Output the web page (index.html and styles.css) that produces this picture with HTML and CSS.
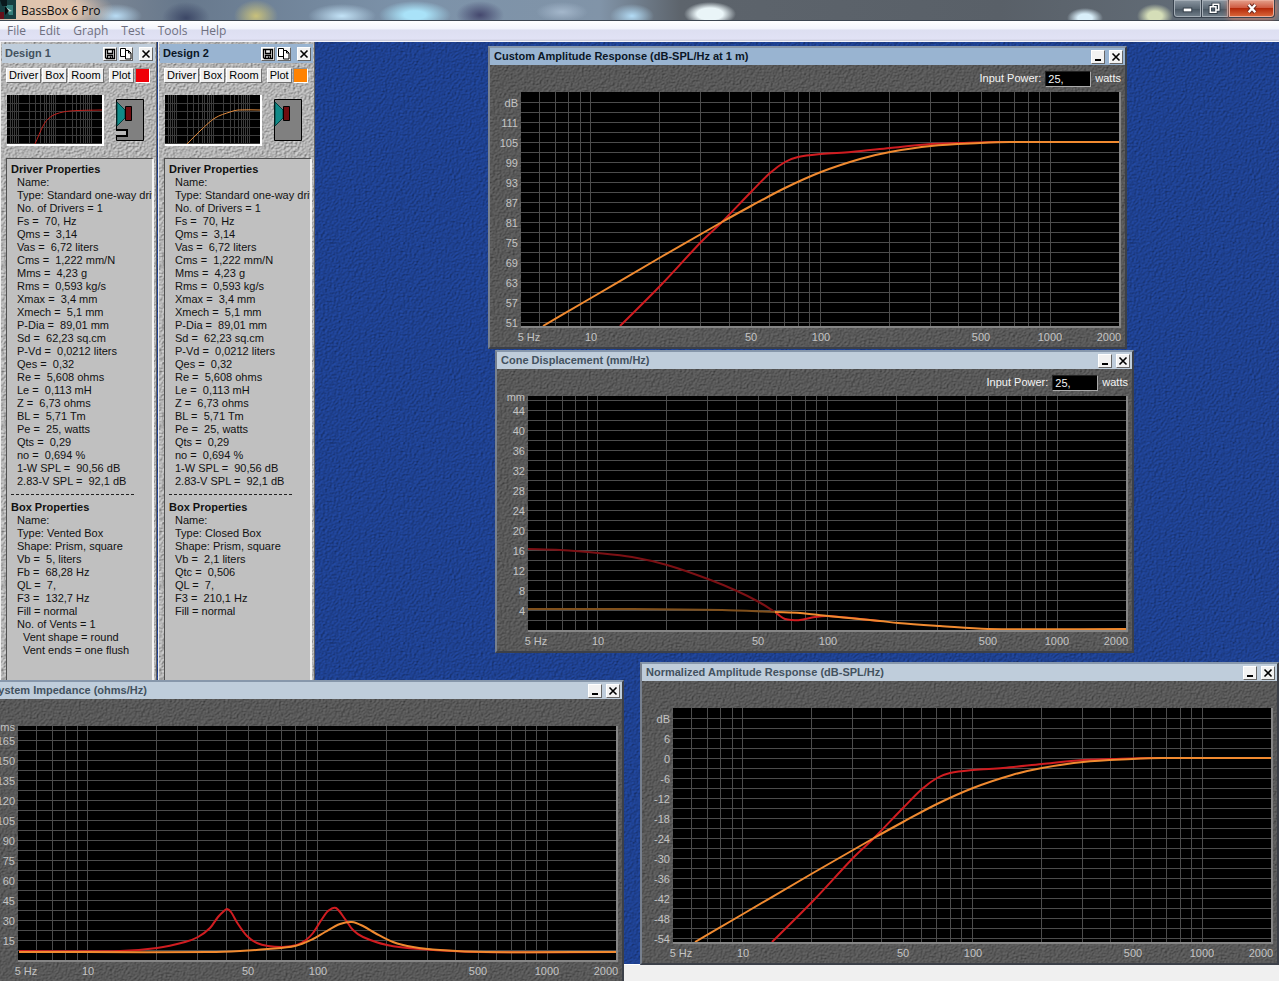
FILE: index.html
```html
<!DOCTYPE html>
<html lang="en">
<head>
<meta charset="utf-8">
<title>BassBox 6 Pro</title>
<link rel="stylesheet" href="styles.css">
</head>
<body>
<svg class="symbols" aria-hidden="true">
  <symbol id="i-close" viewBox="0 0 12 12"><path d="M2.500 2.500l7 7M9.500 2.500l-7 7" fill="none" stroke="#000" stroke-width="1.600"/></symbol>
  <symbol id="i-min" viewBox="0 0 12 12"><path d="M3 9h6" fill="none" stroke="#000" stroke-width="2"/></symbol>
  <symbol id="i-save" viewBox="0 0 12 12"><path d="M1.500 1.500h9v9h-8l-1-1zM3.500 1.500v4h5v-4M3.500 10.500v-3h5v3M6.500 8.500v2" fill="none" stroke="#000" stroke-width="1.300"/></symbol>
  <symbol id="i-copy" viewBox="0 0 12 12"><path d="M.5.5h5v8h-5z" fill="#fff" stroke="#000"/><path d="M5.500 2.500h3l2.500 2.500v6h-5.500zM8.500 2.500v2.500h2.500" fill="#fff" stroke="#000"/></symbol>
</svg>

<div class="app">
  <header class="app-title">
    <svg class="app-icon" viewBox="0 0 16 19" aria-hidden="true">
      <path d="M0 0h16v19H0z" fill="#173e40"/><path d="M0 12h4v7H0z" fill="#64101a"/><path d="M4 5h9v10H9z" fill="#357f7b"/><path d="M7 8l5 3-5 1z" fill="#b8d8d0"/><path d="M0 0h7v6H2z" fill="#0a191c"/><path d="M5 6v9l4-4z" fill="#06090b"/>
    </svg>
    <h1>BassBox 6 Pro</h1>
    <div class="app-controls">
      <button class="ctl" aria-label="Minimize"><svg viewBox="0 0 28 17"><path d="M9 9.500h10" stroke="#333d48" stroke-width="5"/><path d="M10 9.500h8" stroke="#fff" stroke-width="3"/></svg></button>
      <button class="ctl ctl-max" aria-label="Restore"><svg viewBox="0 0 26 17"><path d="M8 6h6v6H8zM11 6V3.500h6v6h-3" fill="none" stroke="#333d48" stroke-width="3.500"/><path d="M8 6h6v6H8zM11 6V3.500h6v6h-3" fill="none" stroke="#fff" stroke-width="1.600"/></svg></button>
      <button class="ctl ctl-close" aria-label="Close"><svg viewBox="0 0 46 17"><path d="M20 4l7 8M27 4l-7 8" fill="none" stroke="#6b2a20" stroke-width="4.500"/><path d="M20 4l7 8M27 4l-7 8" fill="none" stroke="#fff" stroke-width="2.500"/></svg></button>
    </div>
  </header>
  <nav class="menu">
    <button>File</button><button>Edit</button><button>Graph</button><button>Test</button><button>Tools</button><button>Help</button>
  </nav>

  <main class="desktop">
    <section class="design">
      <header class="design-bar">
        <h2>Design 1</h2>
        <button class="tool" aria-label="Save"><svg><use href="#i-save"/></svg></button>
        <button class="tool" aria-label="Copy"><svg><use href="#i-copy"/></svg></button>
        <button class="tool tool-close" aria-label="Close"><svg><use href="#i-close"/></svg></button>
      </header>
      <div class="design-tabs">
        <button>Driver</button><button>Box</button><button>Room</button><button class="plot-btn">Plot</button><button class="swatch swatch-red" aria-label="Plot color"></button>
      </div>
      <div class="design-view">
        <svg class="mini" viewBox="0 0 95 49" data-color="#c0201c" data-curve="28,49 36,31 41,24 49,19 63,16 95,15"></svg>
        <svg class="box-icon" viewBox="0 0 28 42" aria-hidden="true"><path d="M.5.5h27v41H.5z" fill="#808080" stroke="#000"/><path d="M1 3l8 8v8l-8 8z" fill="#108a88" stroke="#073c3c"/><path d="M9.500 7.500h6v14h-6z" fill="#700c10" stroke="#000"/><path d="M0 31h11v6H0" fill="#b8b8b8" stroke="#000" stroke-width="2"/></svg>
      </div>
      <div class="props">
        <h3>Driver Properties</h3>
        <ul>
          <li>Name:</li><li>Type: Standard one-way driv</li><li>No. of Drivers = 1</li><li>Fs =&nbsp; 70, Hz</li><li>Qms =&nbsp; 3,14</li><li>Vas =&nbsp; 6,72 liters</li><li>Cms =&nbsp; 1,222 mm/N</li><li>Mms =&nbsp; 4,23 g</li><li>Rms =&nbsp; 0,593 kg/s</li><li>Xmax =&nbsp; 3,4 mm</li><li>Xmech =&nbsp; 5,1 mm</li><li>P-Dia =&nbsp; 89,01 mm</li><li>Sd =&nbsp; 62,23 sq.cm</li><li>P-Vd =&nbsp; 0,0212 liters</li><li>Qes =&nbsp; 0,32</li><li>Re =&nbsp; 5,608 ohms</li><li>Le =&nbsp; 0,113 mH</li><li>Z =&nbsp; 6,73 ohms</li><li>BL =&nbsp; 5,71 Tm</li><li>Pe =&nbsp; 25, watts</li><li>Qts =&nbsp; 0,29</li><li>no =&nbsp; 0,694 %</li><li>1-W SPL =&nbsp; 90,56 dB</li><li>2.83-V SPL =&nbsp; 92,1 dB</li>
        </ul>
        <hr>
        <h3>Box Properties</h3>
        <ul>
          <li>Name:</li><li>Type: Vented Box</li><li>Shape: Prism, square</li><li>Vb =&nbsp; 5, liters</li><li>Fb =&nbsp; 68,28 Hz</li><li>QL =&nbsp; 7,</li><li>F3 =&nbsp; 132,7 Hz</li><li>Fill = normal</li><li>No. of Vents = 1</li><li class="sub">Vent shape = round</li><li class="sub">Vent ends = one flush</li>
        </ul>
      </div>
    </section>

    <section class="design">
      <header class="design-bar active">
        <h2>Design 2</h2>
        <button class="tool" aria-label="Save"><svg><use href="#i-save"/></svg></button>
        <button class="tool" aria-label="Copy"><svg><use href="#i-copy"/></svg></button>
        <button class="tool tool-close" aria-label="Close"><svg><use href="#i-close"/></svg></button>
      </header>
      <div class="design-tabs">
        <button>Driver</button><button>Box</button><button>Room</button><button class="plot-btn">Plot</button><button class="swatch swatch-orange" aria-label="Plot color"></button>
      </div>
      <div class="design-view">
        <svg class="mini" viewBox="0 0 95 49" data-color="#e08a3c" data-curve="22,49 36,35 50,23 65,17 73,15 95,15"></svg>
        <svg class="box-icon" viewBox="0 0 28 42" aria-hidden="true"><path d="M.5.5h27v41H.5z" fill="#808080" stroke="#000"/><path d="M1 3l8 8v8l-8 8z" fill="#108a88" stroke="#073c3c"/><path d="M9.500 7.500h6v14h-6z" fill="#700c10" stroke="#000"/></svg>
      </div>
      <div class="props">
        <h3>Driver Properties</h3>
        <ul>
          <li>Name:</li><li>Type: Standard one-way driv</li><li>No. of Drivers = 1</li><li>Fs =&nbsp; 70, Hz</li><li>Qms =&nbsp; 3,14</li><li>Vas =&nbsp; 6,72 liters</li><li>Cms =&nbsp; 1,222 mm/N</li><li>Mms =&nbsp; 4,23 g</li><li>Rms =&nbsp; 0,593 kg/s</li><li>Xmax =&nbsp; 3,4 mm</li><li>Xmech =&nbsp; 5,1 mm</li><li>P-Dia =&nbsp; 89,01 mm</li><li>Sd =&nbsp; 62,23 sq.cm</li><li>P-Vd =&nbsp; 0,0212 liters</li><li>Qes =&nbsp; 0,32</li><li>Re =&nbsp; 5,608 ohms</li><li>Le =&nbsp; 0,113 mH</li><li>Z =&nbsp; 6,73 ohms</li><li>BL =&nbsp; 5,71 Tm</li><li>Pe =&nbsp; 25, watts</li><li>Qts =&nbsp; 0,29</li><li>no =&nbsp; 0,694 %</li><li>1-W SPL =&nbsp; 90,56 dB</li><li>2.83-V SPL =&nbsp; 92,1 dB</li>
        </ul>
        <hr>
        <h3>Box Properties</h3>
        <ul>
          <li>Name:</li><li>Type: Closed Box</li><li>Shape: Prism, square</li><li>Vb =&nbsp; 2,1 liters</li><li>Qtc =&nbsp; 0,506</li><li>QL =&nbsp; 7,</li><li>F3 =&nbsp; 210,1 Hz</li><li>Fill = normal</li>
        </ul>
      </div>
    </section>
  </main>
  <footer class="status"></footer>

  <section class="window win-custom">
    <header class="win-bar active"><h2>Custom Amplitude Response (dB-SPL/Hz at 1 m)</h2>
      <button class="tool" aria-label="Minimize"><svg><use href="#i-min"/></svg></button><button class="tool" aria-label="Close"><svg><use href="#i-close"/></svg></button></header>
    <div class="win-tools"><label for="power-a">Input Power:</label><input id="power-a" type="text" value="25,"><span>watts</span></div>
    <div class="chart" data-plot="amplitude">
      <ol class="ylabels"><li class="unit">dB</li><li>111</li><li>105</li><li>99</li><li>93</li><li>87</li><li>81</li><li>75</li><li>69</li><li>63</li><li>57</li><li>51</li></ol>
    </div>
  </section>

  <section class="window win-cone">
    <header class="win-bar"><h2>Cone Displacement (mm/Hz)</h2>
      <button class="tool" aria-label="Minimize"><svg><use href="#i-min"/></svg></button><button class="tool" aria-label="Close"><svg><use href="#i-close"/></svg></button></header>
    <div class="win-tools"><label for="power-b">Input Power:</label><input id="power-b" type="text" value="25,"><span>watts</span></div>
    <div class="chart high" data-plot="cone">
      <ol class="ylabels"><li class="unit">mm</li><li>44</li><li>40</li><li>36</li><li>32</li><li>28</li><li>24</li><li>20</li><li>16</li><li>12</li><li>8</li><li>4</li></ol>
    </div>
  </section>

  <section class="window win-impedance">
    <header class="win-bar"><h2>System Impedance (ohms/Hz)</h2>
      <button class="tool" aria-label="Minimize"><svg><use href="#i-min"/></svg></button><button class="tool" aria-label="Close"><svg><use href="#i-close"/></svg></button></header>
    <div class="win-tools"></div>
    <div class="chart high" data-plot="impedance">
      <ol class="ylabels"><li class="unit">ohms</li><li>165</li><li>150</li><li>135</li><li>120</li><li>105</li><li>90</li><li>75</li><li>60</li><li>45</li><li>30</li><li>15</li></ol>
    </div>
  </section>

  <section class="window win-normal">
    <header class="win-bar"><h2>Normalized Amplitude Response (dB-SPL/Hz)</h2>
      <button class="tool" aria-label="Minimize"><svg><use href="#i-min"/></svg></button><button class="tool" aria-label="Close"><svg><use href="#i-close"/></svg></button></header>
    <div class="win-tools"></div>
    <div class="chart" data-plot="amplitude">
      <ol class="ylabels"><li class="unit">dB</li><li>6</li><li>0</li><li>-6</li><li>-12</li><li>-18</li><li>-24</li><li>-30</li><li>-36</li><li>-42</li><li>-48</li><li>-54</li></ol>
    </div>
  </section>
</div>
<script src="app.js"></script>
</body>
</html>
```

FILE: styles.css
```css
* { box-sizing: border-box; }

body {
  margin: 0;
  overflow: hidden;
  font-family: "Liberation Sans", Arial, sans-serif;
  font-size: 11px;
  line-height: 13px;
  color: #111;
}

h1, h2, h3, ul, ol { margin: 0; padding: 0; list-style: none; font-size: inherit; }

button { padding: 0; border: 0; font: inherit; color: inherit; background: none; }

.symbols { position: absolute; width: 0; height: 0; }

.app {
  position: relative;
  display: flex;
  flex-direction: column;
  height: 100vh;
  overflow: hidden;
}

/* Application frame */

.app-title {
  display: flex;
  flex: none;
  height: 21px;
  border-bottom: 1px solid #3c4650;
  background:
    radial-gradient(ellipse 74px 26px at 40px 10px, #dfc4ae 50%, transparent),
    radial-gradient(ellipse 26px 12px at 116px 16px, #b9dcf4, transparent),
    radial-gradient(ellipse 24px 16px at 186px 18px, #3c4766, transparent),
    radial-gradient(ellipse 22px 16px at 256px 16px, #c9c17b, transparent),
    radial-gradient(ellipse 34px 12px at 342px 16px, #c3e3f7, transparent),
    radial-gradient(ellipse 36px 14px at 415px 15px, #a9e2f8 30%, transparent),
    radial-gradient(ellipse 24px 14px at 480px 15px, #45486e, transparent),
    radial-gradient(ellipse 26px 10px at 562px 12px, #a4b7cb, transparent),
    radial-gradient(ellipse 22px 12px at 632px 16px, #b3dcf6, transparent),
    radial-gradient(ellipse 26px 12px at 710px 14px, #eaf5f8 50%, transparent),
    radial-gradient(ellipse 18px 10px at 1085px 18px, #d9effa 40%, transparent),
    radial-gradient(ellipse 18px 12px at 1155px 16px, #d5deb8 40%, transparent),
    linear-gradient(90deg, #94989e 0, #67788c 180px, #7c92a9 400px, #8194a8 600px, #5d646c 680px, #596068 1000px, #66727e 100%);
}

.app-icon { width: 16px; height: 19px; }

.app-title h1 {
  flex: 1;
  padding-left: 5px;
  font: 12px/21px "Open Sans", "Noto Sans", sans-serif;
  color: #0c0c0c;
}

.app-controls { display: flex; height: 18px; margin-right: 4px; }
.ctl {
  width: 29px;
  border: 1px solid #38424e;
  border-top: 0;
  border-radius: 0 0 0 4px;
  background: linear-gradient(#8b96a1, #5b6874 50%, #485561 52%, #74818c);
  box-shadow: inset 0 0 0 1px #a5aeb7;
}
.ctl svg { display: block; width: 100%; height: 16px; }
.ctl-max { width: 27px; border-left: 0; border-radius: 0; }
.ctl-close {
  width: 46px;
  border-left: 0;
  border-radius: 0 0 4px 0;
  background: linear-gradient(#e5a18d, #cf5c43 45%, #b52a0b 50%, #dd6a3c);
  box-shadow: inset 0 0 0 1px #ecae9c, 0 0 6px #f08060;
}

.menu {
  display: flex;
  flex: none;
  gap: 13px;
  height: 21px;
  padding-left: 7px;
  border-bottom: 1px solid #f4f4fa;
  background: linear-gradient(#fff 0, #f3f5fc 8px, #dddff1 9px, #e1e2f5 18px, #c6c7d6 20px);
  color: #6f7080;
  font: 12px/20px "Open Sans", "Noto Sans", sans-serif;
}

.desktop {
  display: flex;
  flex: 1;
  gap: 1px;
  min-height: 0;
  background-color: #1d4090;
  background-image: url("data:image/svg+xml,%3Csvg xmlns='http://www.w3.org/2000/svg' width='200' height='200'%3E%3Cfilter id='t' x='0' y='0' width='100%25' height='100%25' color-interpolation-filters='sRGB'%3E%3CfeTurbulence type='fractalNoise' baseFrequency='.45 .6' numOctaves='2' stitchTiles='stitch'/%3E%3CfeDiffuseLighting surfaceScale='.8' lighting-color='%23254fb0'%3E%3CfeDistantLight azimuth='225' elevation='55'/%3E%3C/feDiffuseLighting%3E%3C/filter%3E%3Crect width='200' height='200' filter='url(%23t)'/%3E%3C/svg%3E");
}

.status { flex: none; height: 17px; border-top: 1px solid #fff; background: #f0f0f0; }

/* Design panels */

.design {
  display: flex;
  flex-direction: column;
  width: 157px;
  padding: 2px 2px 0 1px;
  border-left: 1px solid #f0f0f0;
  border-right: 1px solid #606060;
  background-color: #b4b4b4;
  background-image: url("data:image/svg+xml,%3Csvg xmlns='http://www.w3.org/2000/svg' width='160' height='160'%3E%3Cfilter id='t' x='0' y='0' width='100%25' height='100%25' color-interpolation-filters='sRGB'%3E%3CfeTurbulence type='fractalNoise' baseFrequency='.45 .6' numOctaves='2' stitchTiles='stitch'/%3E%3CfeDiffuseLighting surfaceScale='1' lighting-color='%23dcdcdc'%3E%3CfeDistantLight azimuth='225' elevation='55'/%3E%3C/feDiffuseLighting%3E%3C/filter%3E%3Crect width='160' height='160' filter='url(%23t)'/%3E%3C/svg%3E");
}

.design-bar, .win-bar {
  display: flex;
  align-items: center;
  background: #bfcddb;
  color: #43525f;
}
.design-bar { gap: 2px; height: 19px; margin-right: -1px; padding: 0 2px 0 3px; }
.design-bar h2 { flex: 1; }
.design-bar.active, .win-bar.active { background: #99b4d1; color: #0a1626; }
.design-bar .tool-close { margin-left: 4px; }

.tool {
  width: 14px;
  height: 14px;
  background: #f2f2f2;
  border: 1px solid;
  border-color: #fff #666 #666 #fff;
}
.tool svg { display: block; width: 12px; height: 12px; }

.design-tabs { display: flex; gap: 1px; padding: 5px 0 0 4px; }
.design-tabs button {
  height: 15px;
  padding: 0 2px;
  border: 1px solid;
  border-color: #fff #707070 #707070 #fff;
  background: #f0f0f0;
  color: #000;
}
.design-tabs .plot-btn { margin-left: 4px; }
.design-tabs .swatch { width: 15px; border-color: #909090 #fff #fff #909090; }
.design-tabs .swatch-red { background: #f00008; }
.design-tabs .swatch-orange { background: #ff8200; }

.design-view { display: flex; gap: 12px; padding: 12px 0 0 5px; }
.mini { width: 97px; height: 51px; border: solid #fff; border-width: 0 2px 2px 0; background: #000; }
.box-icon { width: 28px; height: 42px; margin-top: 4px; }

.props {
  flex: 1;
  min-height: 0;
  margin: 12px 0 0 4px;
  padding: 4px 0 0 4px;
  overflow: hidden;
  border: solid;
  border-width: 1px 2px 0 1px;
  border-color: #505050 #f4f4f4 #f4f4f4 #505050;
  background: #c0c0c0;
}
.props h3 { font-weight: bold; }
.props li { padding-left: 6px; white-space: nowrap; }
.props .sub { padding-left: 12px; }
.props hr { width: 123px; margin: 6px 0; border: 0; border-top: 1px dashed #222; }

/* Graph windows float freely over the desktop */

.window {
  position: absolute;
  width: 639px;
  border: 2px solid;
  border-color: #8797ab #3c4048 #3c4048 #77808e;
  background-color: #565656;
  background-image: url("data:image/svg+xml,%3Csvg xmlns='http://www.w3.org/2000/svg' width='200' height='200'%3E%3Cfilter id='t' x='0' y='0' width='100%25' height='100%25' color-interpolation-filters='sRGB'%3E%3CfeTurbulence type='fractalNoise' baseFrequency='.45 .6' numOctaves='2' stitchTiles='stitch'/%3E%3CfeDiffuseLighting surfaceScale='.9' lighting-color='%236c6c6c'%3E%3CfeDistantLight azimuth='225' elevation='55'/%3E%3C/feDiffuseLighting%3E%3C/filter%3E%3Crect width='200' height='200' filter='url(%23t)'/%3E%3C/svg%3E");
}
.win-custom { left: 488px; top: 46px; }
.win-cone { left: 495px; top: 350px; }
.win-impedance { left: -15px; top: 680px; }
.win-normal { left: 640px; top: 662px; }

.win-bar { gap: 4px; height: 17px; padding: 0 2px 0 4px; }
.win-bar h2 { flex: 1; }

.win-tools {
  display: flex;
  align-items: center;
  justify-content: flex-end;
  height: 27px;
  padding-right: 4px;
  color: #f4f4f4;
}
.win-tools input {
  width: 46px;
  height: 16px;
  margin: 0 4px;
  padding: 0 2px;
  border: 1px solid;
  border-color: #222 #aaa #aaa #222;
  border-radius: 0;
  background: #000;
  color: #f4f4f4;
  font: inherit;
}

.chart { display: grid; grid-template-columns: 31px 600px; align-items: start; color: #c4c4c4; }
.ylabels { margin: -10px 0; padding: 11px 3px 0 0; text-align: right; }
.ylabels li { height: 20px; line-height: 20px; }
.high .ylabels { padding-top: 5px; }
.high .ylabels .unit { height: 10px; line-height: 12px; }
.plot { display: block; width: 600px; height: 236px; border: solid #858585; border-width: 0 2px 2px 0; background: #000; }
.xaxis { grid-column: 2; display: block; width: 600px; height: 19px; overflow: visible; fill: currentColor; }
```

FILE: app.js
```js
const NS = "http://www.w3.org/2000/svg";

function add(parent, name, attrs, text) {
  const node = document.createElementNS(NS, name);
  for (const key in attrs) node.setAttribute(key, attrs[key]);
  if (text) node.textContent = text;
  parent.appendChild(node);
  return node;
}

// Smooth path through the points (Catmull-Rom converted to cubic Bezier).
function smooth(list) {
  const p = list.split(" ").map(s => s.split(",").map(Number));
  let d = "M" + p[0];
  for (let i = 0; i < p.length - 1; i++) {
    const a = p[i - 1] || p[i], b = p[i], c = p[i + 1], e = p[i + 2] || c;
    const k = (c[0] - b[0]) / 3;
    const m1 = (c[1] - a[1]) / (c[0] - a[0]);
    const m2 = (e[1] - b[1]) / (e[0] - b[0]);
    d += `C${b[0] + k},${b[1] + k * m1} ${c[0] - k},${c[1] - k * m2} ${c}`;
  }
  return d;
}

const FREQS = [6, 7, 8, 9, 10, 20, 30, 40, 50, 60, 70, 80, 90, 100,
  200, 300, 400, 500, 600, 700, 800, 900, 1000];

function grid(svg, width, height, first, step, color) {
  let d = "";
  for (const f of FREQS) {
    const x = Math.round(width * Math.log(f / 5) / Math.log(400)) + 0.5;
    d += `M${x} 0V${height}`;
  }
  for (let y = first; y < height; y += step) d += `M0 ${y + 0.5}H${width}`;
  add(svg, "path", { d, stroke: color, fill: "none" });
}

const RED = "#d01c20", ORANGE = "#f08a30";
const PLOTS = {
  amplitude: {
    first: 10,
    curves: [
      [RED, "99,234 140,193 181,149 201,130 230,100 249,81 264,70 277,65 300,62 330,60 369,56 410,52 439,51 479,50 598,50"],
      [ORANGE, "22,234 70,206 140,165 201,130 230,114 264,96 300,80 339,67 369,60 410,54 459,51 489,50 598,50"]
    ]
  },
  cone: {
    first: 4,
    curves: [
      ["#7c1014", "0,153 32,154 70,157 104,161 139,169 180,183 209,195 231,206 247,216"],
      [RED, "247,216 252,220 257,223 264,224 272,224 287,221 300,220 352,225"],
      ["#80501c", "0,213 104,213 194,214 247,216"],
      [ORANGE, "247,216 272,217 300,220 352,225 370,227 412,230 460,233 598,233"]
    ]
  },
  impedance: {
    first: 4,
    curves: [
      [RED, "1,225 102,225 139,222 167,216 180,211 192,202 200,191 206,185 209,183 213,186 220,198 229,210 239,217 250,220 265,221 279,219 288,214 295,207 304,193 310,185 318,182 327,193 335,204 345,211 369,219 402,223 462,226 598,226"],
      [ORANGE, "1,226 192,226 222,225 250,223 277,220 295,213 307,206 322,198 334,196 345,200 357,207 375,216 395,221 422,224 469,226 598,226"]
    ]
  }
};

const XLABELS = [["5 Hz", 8], ["10", 70], ["50", 230], ["100", 300], ["500", 460], ["1000", 529], ["2000", 588]];

for (const chart of document.querySelectorAll(".chart")) {
  const plot = PLOTS[chart.dataset.plot];
  const svg = add(chart, "svg", { class: "plot", viewBox: "0 0 598 234" });
  grid(svg, 598, 234, plot.first, 10, "#4c4c4c");
  for (const [color, points] of plot.curves) {
    add(svg, "path", { d: smooth(points), stroke: color, "stroke-width": 2, fill: "none" });
  }
  const axis = add(chart, "svg", { class: "xaxis" });
  for (const [text, x] of XLABELS) {
    add(axis, "text", { x, y: 13, "text-anchor": "middle" }, text);
  }
}

for (const mini of document.querySelectorAll(".mini")) {
  grid(mini, 95, 49, 8, 8, "#3c3c3c");
  add(mini, "path", { d: smooth(mini.dataset.curve), stroke: mini.dataset.color, fill: "none" });
}
```
